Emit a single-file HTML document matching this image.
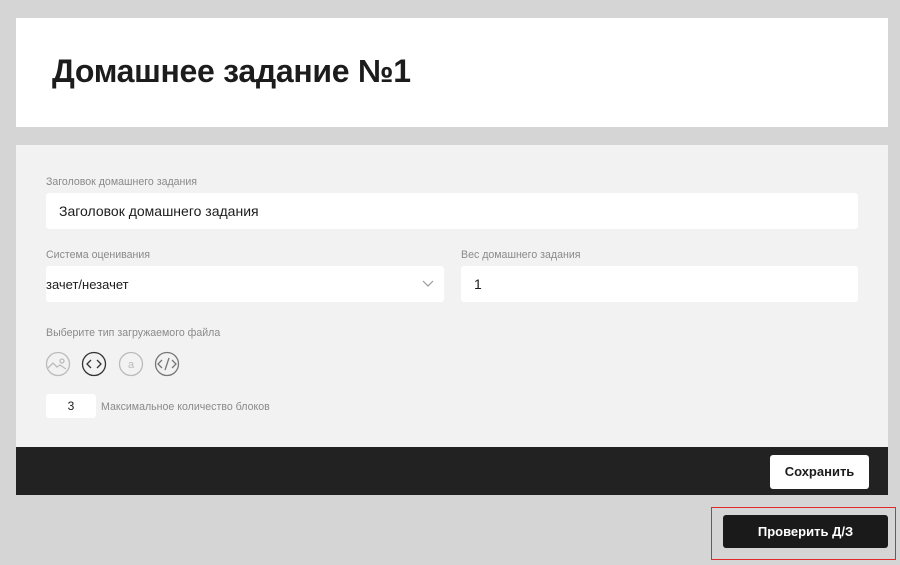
<!DOCTYPE html><html><head><meta charset="utf-8"><style>
*{margin:0;padding:0;box-sizing:border-box}
body{width:900px;height:565px;background:#d4d5d4;font-family:"Liberation Sans",sans-serif;position:relative;overflow:hidden;color:#1c1c1c}
.a{position:absolute}
.lbl{font-size:10.6px;color:#8a8a8a}
.in{background:#fff;border-radius:3px;font-size:14px;padding-left:13px;display:flex;align-items:center}
</style></head><body>
<div class="a" style="left:16px;top:18px;width:872px;height:109px;background:#fff"></div>
<div class="a" style="left:52px;top:53px;font-size:32px;font-weight:bold;letter-spacing:-0.3px">Домашнее задание №1</div>
<div class="a" style="left:16px;top:145px;width:872px;height:302px;background:#f2f2f2"></div>
<div class="a lbl" style="left:46px;top:176px">Заголовок домашнего задания</div>
<div class="a in" style="left:46px;top:193px;width:812px;height:36px">Заголовок домашнего задания</div>
<div class="a lbl" style="left:46px;top:249px">Система оценивания</div>
<div class="a in" style="left:46px;top:266px;width:398px;height:36px;padding-left:0;font-size:13px">зачет/незачет
<svg class="a" style="left:376px;top:14px" width="12" height="8"><path d="M1 1l5 5 5-5" fill="none" stroke="#999" stroke-width="1.2"/></svg></div>
<div class="a lbl" style="left:461px;top:249px">Вес домашнего задания</div>
<div class="a in" style="left:461px;top:266px;width:397px;height:36px">1</div>
<div class="a lbl" style="left:46px;top:327px">Выберите тип загружаемого файла</div>
<svg class="a" style="left:45px;top:351px" width="140" height="26">
<g fill="none" stroke-width="1.3">
<circle cx="13" cy="13" r="11.5" stroke="#bbb"/><path d="M3 17l5-5 4 4 3-2 6 4" stroke="#bbb"/><circle cx="17" cy="10" r="2" stroke="#bbb"/>
<circle cx="49" cy="13" r="11.5" stroke="#333"/><path d="M46 9l-4 4 4 4M52 9l4 4-4 4" stroke="#333"/>
<circle cx="86" cy="13" r="11.5" stroke="#bbb"/>
<circle cx="122" cy="13" r="11.5" stroke="#777"/><path d="M117 9l-4 4 4 4M127 9l4 4-4 4M124 7l-4 12" stroke="#777"/>
</g><text x="86" y="17" font-size="11" fill="#bbb" text-anchor="middle" font-family="Liberation Sans">a</text></svg>
<div class="a" style="left:46px;top:394px;width:50px;height:24px;background:#fff;border-radius:3px;font-size:12px;text-align:center;line-height:24px">3</div>
<div class="a lbl" style="left:101px;top:401px">Максимальное количество блоков</div>
<div class="a" style="left:16px;top:447px;width:872px;height:48px;background:#222"></div>
<div class="a" style="left:770px;top:455px;width:99px;height:34px;background:#fff;border-radius:3px;font-size:13px;font-weight:bold;text-align:center;line-height:34px">Сохранить</div>
<div class="a" style="left:711px;top:507px;width:185px;height:53px;border:1.5px solid #e02a2a"></div>
<div class="a" style="left:723px;top:515px;width:165px;height:33px;background:#1a1a1a;border-radius:3px;color:#fff;font-size:13px;font-weight:bold;text-align:center;line-height:33px">Проверить Д/З</div>
</body></html>
